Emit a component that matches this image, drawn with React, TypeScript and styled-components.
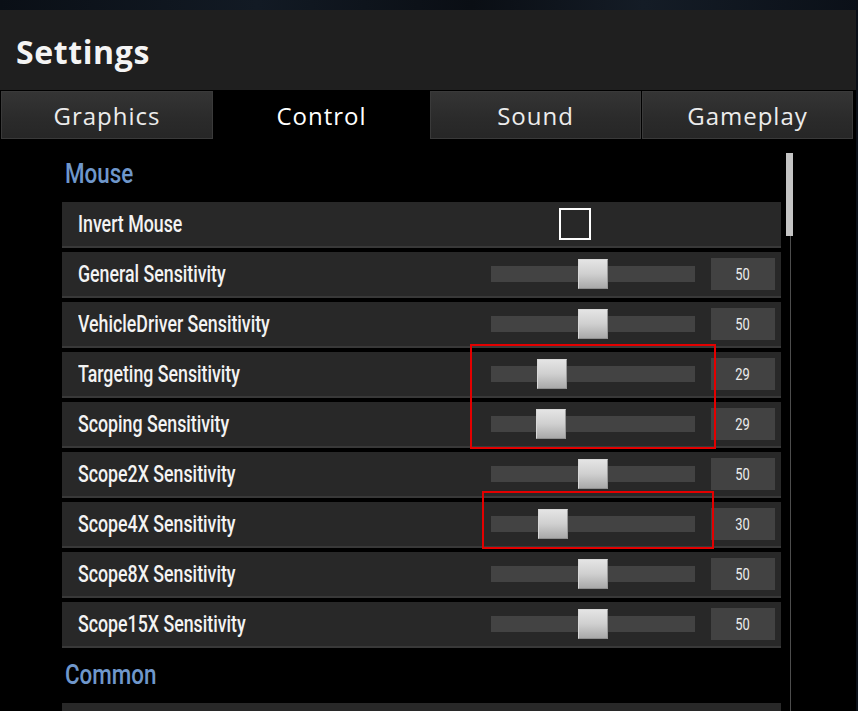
import React from "react";
import styled, { createGlobalStyle } from "styled-components";

const GlobalStyle = createGlobalStyle`
  html, body {
    margin: 0;
    padding: 0;
    background: #0b1119;
  }
  body {
    width: 858px;
    height: 711px;
    overflow: hidden;
  }
`;

const condensedBase = `"Roboto", "Liberation Sans", "DejaVu Sans", sans-serif`;
const humanist = `"Open Sans", "Noto Sans", "DejaVu Sans", sans-serif`;

const Screen = styled.div`
  width: 858px;
  height: 711px;
  display: flex;
  flex-direction: column;
  background: linear-gradient(90deg, #0a0f16 0%, #121a24 30%, #0a0e14 55%, #141c26 75%, #0b1018 100%);
  overflow: hidden;
`;

const Backdrop = styled.div`
  height: 10px;
  flex: none;
`;

const Panel = styled.div`
  width: 856px;
  flex: 1;
  display: flex;
  flex-direction: column;
  background: #000;
  overflow: hidden;
`;

const Header = styled.div`
  height: 80px;
  flex: none;
  background: #1f1f1f;
  display: flex;
  align-items: center;
  padding-left: 16px;
  padding-top: 2px;
  box-sizing: border-box;
`;

const Title = styled.h1`
  margin: 0;
  font-family: ${humanist};
  font-weight: 700;
  font-size: 32px;
  letter-spacing: 0.6px;
  color: #f4f4f4;
`;

const TabBar = styled.div`
  display: grid;
  grid-template-columns: 212px 215px 211px 211px;
  column-gap: 1px;
  padding: 1px 0 0 1px;
  height: 48px;
  flex: none;
`;

const Tab = styled.div<{ $active?: boolean }>`
  display: flex;
  align-items: center;
  justify-content: center;
  font-family: ${humanist};
  font-size: 24px;
  letter-spacing: 1px;
  color: ${(p) => (p.$active ? "#ffffff" : "#ececec")};
  background: ${(p) =>
    p.$active ? "#000" : "linear-gradient(180deg, #353535 0%, #2b2b2b 55%, #262626 100%)"};
  box-shadow: ${(p) => (p.$active ? "none" : "inset 0 0 0 1px #3a3a3a")};
`;

const Body = styled.div`
  flex: 1;
  display: flex;
  padding-left: 62px;
  column-gap: 5px;
  overflow: hidden;
`;

const List = styled.div`
  position: relative;
  width: 719px;
  flex: none;
  padding-top: 8px;
`;

const SectionTitle = styled.h2`
  margin: 7px 0 8px 3px;
  height: 40px;
  line-height: 40px;
  font-family: ${condensedBase};
  font-weight: 500;
  font-size: 28px;
  color: #6f97cb;
  white-space: nowrap;
`;

const Squeeze = styled.span<{ $sx: number; $origin?: string }>`
  display: inline-block;
  transform: scaleX(${(p) => p.$sx});
  transform-origin: ${(p) => p.$origin ?? "left center"};
  white-space: nowrap;
`;

const Row = styled.div`
  height: 44px;
  border-bottom: 2px solid #393939;
  margin-bottom: 4px;
  background: #282828;
  display: grid;
  grid-template-columns: 1fr 204px 64px;
  column-gap: 16px;
  align-items: center;
  padding: 0 6px 0 16px;
`;

const Label = styled.span`
  font-family: ${condensedBase};
  font-weight: 500;
  font-size: 24px;
  color: #f3f3f3;
  white-space: nowrap;
`;

const Check = styled.div`
  width: 28px;
  height: 28px;
  border: 2px solid #ffffff;
  margin-left: 68px;
`;

const Track = styled.div`
  position: relative;
  height: 16px;
  background: #434343;
`;

const Thumb = styled.div`
  position: absolute;
  top: -7px;
  width: 28px;
  height: 28px;
  border: 1px solid #d9d9d9;
  border-right-color: #9a9a9a;
  border-bottom-color: #8e8e8e;
  background: linear-gradient(180deg, #e4e4e4 0%, #cfcfcf 50%, #a9a9a9 100%);
`;

const Value = styled.div`
  height: 32px;
  background: #424242;
  display: flex;
  align-items: center;
  justify-content: center;
  font-family: ${condensedBase};
  font-size: 17px;
  color: #ececec;
`;

const Highlight = styled.div<{ $left: number; $top: number; $w: number; $h: number }>`
  position: absolute;
  left: ${(p) => p.$left}px;
  top: ${(p) => p.$top}px;
  width: ${(p) => p.$w}px;
  height: ${(p) => p.$h}px;
  box-sizing: border-box;
  border: 2px solid #e30000;
  pointer-events: none;
`;

const ScrollCol = styled.div`
  width: 7px;
  flex: none;
  display: flex;
  flex-direction: column;
  align-items: center;
  padding-top: 14px;
`;

const ScrollThumb = styled.div`
  width: 7px;
  height: 83px;
  background: #c4c4c4;
  flex: none;
`;

const ScrollLine = styled.div`
  width: 1px;
  flex: 1;
  background: #4d4d4d;
  margin-left: 1px;
`;

type Setting = { label: string; value?: number; pos?: number; check?: boolean };

const mouse: Setting[] = [
  { label: "Invert Mouse", check: true },
  { label: "General Sensitivity", value: 50, pos: 0.5 },
  { label: "VehicleDriver Sensitivity", value: 50, pos: 0.5 },
  { label: "Targeting Sensitivity", value: 29, pos: 0.264 },
  { label: "Scoping Sensitivity", value: 29, pos: 0.259 },
  { label: "Scope2X Sensitivity", value: 50, pos: 0.5 },
  { label: "Scope4X Sensitivity", value: 30, pos: 0.27 },
  { label: "Scope8X Sensitivity", value: 50, pos: 0.5 },
  { label: "Scope15X Sensitivity", value: 50, pos: 0.5 },
];

const TRAVEL = 174;

function SettingRow({ s }: { s: Setting }) {
  return (
    <Row>
      <Label>
        <Squeeze $sx={0.74}>{s.label}</Squeeze>
      </Label>
      {s.check ? (
        <Check />
      ) : (
        <Track>
          <Thumb style={{ left: Math.round((s.pos ?? 0) * TRAVEL) }} />
        </Track>
      )}
      {s.value !== undefined ? (
        <Value>
          <Squeeze $sx={0.76} $origin="center">
            {s.value}
          </Squeeze>
        </Value>
      ) : (
        <span />
      )}
    </Row>
  );
}

export default function App() {
  return (
    <>
      <GlobalStyle />
      <Screen>
        <Backdrop />
        <Panel>
          <Header>
            <Title>Settings</Title>
          </Header>
          <TabBar>
            <Tab>Graphics</Tab>
            <Tab $active>Control</Tab>
            <Tab>Sound</Tab>
            <Tab>Gameplay</Tab>
          </TabBar>
          <Body>
            <List>
              <SectionTitle>
                <Squeeze $sx={0.8}>Mouse</Squeeze>
              </SectionTitle>
              {mouse.map((s) => (
                <SettingRow key={s.label} s={s} />
              ))}
              <SectionTitle>
                <Squeeze $sx={0.8}>Common</Squeeze>
              </SectionTitle>
              <Row />
              <Highlight $left={408} $top={205} $w={246} $h={105} />
              <Highlight $left={420} $top={352} $w={232} $h={58} />
            </List>
            <ScrollCol>
              <ScrollThumb />
              <ScrollLine />
            </ScrollCol>
          </Body>
        </Panel>
      </Screen>
    </>
  );
}
